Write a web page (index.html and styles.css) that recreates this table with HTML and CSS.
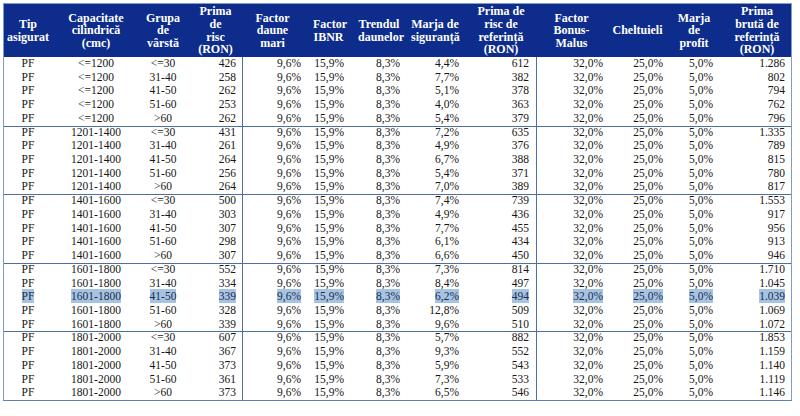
FILE: index.html
```html
<!DOCTYPE html>
<html lang="ro">
<head>
<meta charset="utf-8">
<title>Tabel prime</title>
<link rel="stylesheet" href="styles.css">
</head>
<body>
<div class="frame">
<table class="tbl">
<colgroup>
<col class="w1"><col class="w2"><col class="w3"><col class="w4"><col class="w5"><col class="w6"><col class="w7"><col class="w8"><col class="w9"><col class="w10"><col class="w11"><col class="w12"><col class="w13">
</colgroup>
<thead>
<tr>
<th class="h1">Tip<br>asigurat</th>
<th class="h2">Capacitate<br>cilindrică<br>(cmc)</th>
<th class="h3">Grupa<br>de<br>vârstă</th>
<th class="h4">Prima<br>de<br>risc<br>(RON)</th>
<th class="h5">Factor<br>daune<br>mari</th>
<th class="h6">Factor<br>IBNR</th>
<th class="h7">Trendul<br>daunelor</th>
<th class="h8">Marja de<br>siguranță</th>
<th class="h9">Prima de<br>risc de<br>referință<br>(RON)</th>
<th class="h10">Factor<br>Bonus-<br>Malus</th>
<th class="h11">Cheltuieli</th>
<th class="h12">Marja<br>de<br>profit</th>
<th class="h13">Prima<br>brută de<br>referință<br>(RON)</th>
</tr>
</thead>
<tbody id="rows"></tbody>
</table>
</div>
<script src="app.js"></script>
</body>
</html>
```
FILE: app.js
```js
var groups = [
  ["&lt;=1200", [["&lt;=30","426","4,4%","612","1.286"],["31-40","258","7,7%","382","802"],["41-50","262","5,1%","378","794"],["51-60","253","4,0%","363","762"],["&gt;60","262","5,4%","379","796"]]],
  ["1201-1400", [["&lt;=30","431","7,2%","635","1.335"],["31-40","261","4,9%","376","789"],["41-50","264","6,7%","388","815"],["51-60","256","5,4%","371","780"],["&gt;60","264","7,0%","389","817"]]],
  ["1401-1600", [["&lt;=30","500","7,4%","739","1.553"],["31-40","303","4,9%","436","917"],["41-50","307","7,7%","455","956"],["51-60","298","6,1%","434","913"],["&gt;60","307","6,6%","450","946"]]],
  ["1601-1800", [["&lt;=30","552","7,3%","814","1.710"],["31-40","334","8,4%","497","1.045"],["41-50","339","6,2%","494","1.039"],["51-60","328","12,8%","509","1.069"],["&gt;60","339","9,6%","510","1.072"]]],
  ["1801-2000", [["&lt;=30","607","5,7%","882","1.853"],["31-40","367","9,3%","552","1.159"],["41-50","373","5,9%","543","1.140"],["51-60","361","7,3%","533","1.119"],["&gt;60","373","6,5%","546","1.146"]]]
];
var html = "";
groups.forEach(function (g, gi) {
  g[1].forEach(function (r, ri) {
    var cls = [];
    if (ri === 0 && gi > 0) cls.push("grp");
    if (gi === 3 && ri === 2) cls.push("sel");
    var cells = ["PF", g[0], r[0], r[1], "9,6%", "15,9%", "8,3%", r[2], r[3], "32,0%", "25,0%", "5,0%", r[4]];
    html += '<tr class="' + cls.join(" ") + '">';
    cells.forEach(function (c, ci) {
      html += '<td class="c' + (ci + 1) + '"><span class="t">' + c + '</span></td>';
    });
    html += "</tr>";
  });
});
document.getElementById("rows").innerHTML = html;
```
FILE: styles.css
```css
html, body {
  margin: 0;
  padding: 0;
  background: #ffffff;
}
body {
  font-family: "Liberation Serif", "Times New Roman", serif;
  font-size: 11.5px;
  color: #161616;
}
.frame {
  margin: 3px 0 0 3px;
  width: 789px;
  box-sizing: border-box;
  border: 1px solid #7d9cc9;
  border-bottom-color: #5f7fb0;
  box-shadow: 0 1px 0 #b9bec6;
}
.tbl {
  table-layout: fixed;
  width: 787px;
  border-collapse: separate;
  border-spacing: 0;
}
.w1 { width: 48px; }
.w2 { width: 88px; }
.w3 { width: 46px; }
.w4 { width: 56px; }
.w5 { width: 64px; }
.w6 { width: 46px; }
.w7 { width: 54px; }
.w8 { width: 60px; }
.w9 { width: 70px; }
.w10 { width: 74px; }
.w11 { width: 58px; }
.w12 { width: 52px; }
.w13 { width: 71px; }

th {
  background: #0d2c8c;
  color: #ffffff;
  font-weight: bold;
  font-size: 12px;
  line-height: 12.6px;
  height: 53px;
  padding: 0;
  text-align: center;
  vertical-align: middle;
  box-sizing: border-box;
  white-space: nowrap;
}
.h4 { padding-left: 9px; padding-right: 6px; }
.h5 { padding-left: 2px; padding-right: 5px; }
.h6 { padding-left: 7px; padding-right: 8px; }
.h7 { padding-left: 6px; padding-right: 6px; }
.h8 { padding-left: 5px; padding-right: 7px; }
.h9 { padding-left: 7px; padding-right: 7px; }
.h10 { padding-left: 4px; padding-right: 7px; }
.h11 { padding-left: 2px; padding-right: 5px; }
.h12 { padding-left: 7px; padding-right: 7px; }
.h13 { padding-left: 9px; padding-right: 6px; }

td {
  padding: 0;
  line-height: 13.72px;
  height: 13.72px;
  white-space: nowrap;
  text-align: right;
}
td.c1, td.c2, td.c3 { text-align: center; }
td.c4 { padding-right: 6px; }
td.c5 { padding-right: 5px; box-shadow: inset 1px 0 0 #4d6fa8; }
td.c6 { padding-right: 8px; }
td.c7 { padding-right: 6px; }
td.c8 { padding-right: 7px; }
td.c9 { padding-right: 7px; }
td.c10 { padding-right: 7px; box-shadow: inset 1px 0 0 #4d6fa8; }
td.c11 { padding-right: 5px; }
td.c12 { padding-right: 7px; }
td.c13 { padding-right: 6px; }

tr.grp td { box-shadow: inset 0 1px 0 #4d6fa8; }
tr.grp td.c5, tr.grp td.c10 { box-shadow: inset 1px 0 0 #4d6fa8, inset 0 1px 0 #4d6fa8; }

tr.sel .t {
  background: #a6c4e2;
  color: #1c2c4e;
  padding: 1px 0;
}
```
